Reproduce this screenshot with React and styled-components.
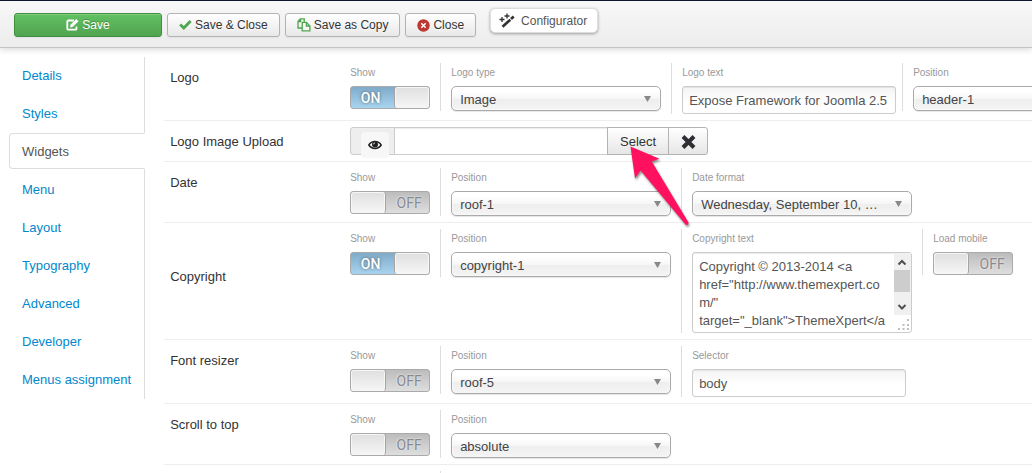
import React from 'react';
import styled, { createGlobalStyle, css } from 'styled-components';

const Global = createGlobalStyle`
  *, *::before, *::after { box-sizing: border-box; }
  body {
    margin: 0;
    background: #fff;
    color: #333;
    font: 13px/18px "Liberation Sans", Arial, Helvetica, sans-serif;
  }
  button, input, select, textarea { font: inherit; margin: 0; }
`;

const App = styled.div`
  min-height: 100vh;
  overflow: hidden;
`;

const Toolbar = styled.header`
  display: flex;
  align-items: flex-start;
  gap: 5px;
  height: 48px;
  padding: 12px 14px 0;
  border-top: 1px solid #10142d;
  border-bottom: 1px solid #c4c4c4;
  background: linear-gradient(#f8f8f8, #ececec);
  box-shadow: 0 2px 6px rgba(0, 0, 0, 0.14);
`;

const ToolButton = styled.button`
  display: flex;
  align-items: center;
  justify-content: center;
  gap: 3px;
  height: 24px;
  min-width: ${(p) => (p.$primary ? '148px' : '0')};
  padding: 0 11px;
  border: 1px solid ${(p) => (p.$primary ? '#3f8f3f' : '#b3b3b3')};
  border-radius: 3px;
  font-size: 12px;
  line-height: 18px;
  color: ${(p) => (p.$primary ? '#fff' : '#333')};
  background: ${(p) =>
    p.$primary ? 'linear-gradient(#62c162, #51a351)' : 'linear-gradient(#fff, #e8e8e8)'};
  text-shadow: ${(p) => (p.$primary ? '0 -1px 0 rgba(0,0,0,.25)' : '0 1px 1px rgba(255,255,255,.75)')};
  box-shadow: inset 0 1px 0 rgba(255, 255, 255, 0.2), 0 1px 2px rgba(0, 0, 0, 0.05);
`;

const ConfigButton = styled.button`
  display: flex;
  align-items: center;
  gap: 6px;
  height: 25px;
  margin: -5px 0 0 9px;
  padding: 0 10px 0 8px;
  border: 1px solid #ddd;
  border-radius: 5px;
  font-size: 12px;
  color: #555;
  background: #fff;
  box-shadow: 0 1px 3px rgba(0, 0, 0, 0.35);
`;

const Body = styled.div`
  display: flex;
  align-items: flex-start;
  gap: 19px;
  padding: 9px 0 0 9px;
`;

const Nav = styled.nav`
  flex: 0 0 136px;
  border-right: 1px solid #ddd;
`;

const NavLink = styled.a`
  display: block;
  margin: 0 0 2px;
  padding: 9px 12px 7px;
  border: 1px solid transparent;
  color: #0088cc;
  text-decoration: none;
  white-space: nowrap;
  ${(p) =>
    p.$active &&
    css`
      margin-right: -1px;
      border-color: #ddd #fff #ddd #ddd;
      border-radius: 4px 0 0 4px;
      color: #555;
      background: #fff;
    `}
`;

const Panel = styled.main`
  flex: 1;
  min-width: 0;
`;

const Row = styled.section`
  display: flex;
  align-items: flex-start;
  padding: 6px 0 6px 6px;
  border-bottom: 1px solid #eee;
`;

const RowTitle = styled.div`
  flex: 0 0 180px;
  padding: ${(p) => (p.$middle ? '0 0 8px' : '6px 0 0')};
  align-self: ${(p) => (p.$middle ? 'center' : 'flex-start')};
`;

const Cell = styled.div`
  flex: none;
  min-height: 2px;
  width: ${(p) => p.$width}px;
  padding-left: ${(p) => (p.$first ? 0 : 10)}px;
  border-left: ${(p) => (p.$first ? 0 : 1)}px solid #ddd;
`;

const Caption = styled.label`
  display: block;
  height: 23px;
  font-size: 10px;
  line-height: 20px;
  color: #999;
`;

const SelectBox = styled.div`
  display: grid;
  align-items: center;
  width: ${(p) => p.$width}px;

  select, svg { grid-area: 1 / 1; }
  svg {
    justify-self: end;
    margin-right: 10px;
    pointer-events: none;
  }
`;

const Dropdown = styled.select`
  appearance: none;
  width: 100%;
  height: 25px;
  padding: 2px 24px 0 8px;
  border: 1px solid #aaa;
  border-radius: 5px;
  color: #444;
  background: linear-gradient(#fff 20%, #f6f6f6 50%, #eee 52%, #f4f4f4 100%);
  box-shadow: inset 0 0 3px #fff, 0 1px 1px rgba(0, 0, 0, 0.1);
`;

const TextBox = styled.input`
  display: block;
  width: 214px;
  height: 28px;
  padding: 1px 6px 0;
  border: 1px solid #ccc;
  border-radius: 3px;
  color: #555;
  background: linear-gradient(#f4f4f4, #fff 60%);
  box-shadow: inset 0 1px 1px rgba(0, 0, 0, 0.075);
`;

const AreaBox = styled.div`
  position: relative;
  width: 220px;

  svg {
    position: absolute;
    top: 1px;
    right: 1px;
  }
`;

const Area = styled.textarea`
  display: block;
  width: 100%;
  height: 81px;
  padding: 5px 18px 3px 6px;
  border: 1px solid #ccc;
  border-radius: 3px;
  color: #555;
  background: #fff;
  line-height: 18px;
  white-space: pre;
  overflow: hidden;
  resize: none;
  box-shadow: inset 0 1px 1px rgba(0, 0, 0, 0.075);
`;

const Toggle = styled.label`
  display: flex;
  flex-direction: ${(p) => (p.$on ? 'row' : 'row-reverse')};
  width: 80px;
  height: 23px;
  border: 1px solid #aaa;
  border-radius: 3px;
  overflow: hidden;
  background: ${(p) =>
    p.$on ? 'linear-gradient(#7fabc9, #a9d4f0)' : 'linear-gradient(#bcbcbc, #dedede)'};

  input {
    appearance: none;
    width: 0;
    height: 0;
  }
`;

const ToggleText = styled.span`
  flex: 1;
  text-align: center;
  font: ${(p) => (p.$on ? 500 : 400)} 14px/23px Roboto, sans-serif;
  color: ${(p) => (p.$on ? '#fff' : '#888890')};
  text-shadow: ${(p) => (p.$on ? '0 0 3px rgba(0,0,0,.5)' : '0 0 2px #fff')};
  padding: ${(p) => (p.$on ? '0 4px 0 0' : '0 0 0 3px')};
`;

const Knob = styled.span`
  width: 35px;
  border-${(p) => (p.$on ? 'left' : 'right')}: 1px solid #a5a5a5;
  border-radius: 3px;
  background: linear-gradient(#dfdfdf, #f6f6f6);
  box-shadow: inset 0 0 0 1px #f6f6f6;
`;

const Upload = styled.div`
  display: flex;
  height: 28px;
`;

const Addon = styled.button`
  display: flex;
  justify-content: flex-end;
  width: 45px;
  padding: 4px 5px 0 0;
  border: 1px solid #ccc;
  border-radius: 3px 0 0 3px;
  background: #eee;

  span {
    display: flex;
    align-items: center;
    justify-content: center;
    width: 28px;
    height: 26px;
    flex: none;
    border-radius: 4px;
    background: #f7f7f7;
  }
`;

const UploadBox = styled(TextBox)`
  width: 214px;
  margin: 0 -1px;
  border-radius: 0;
  background: #fff;
`;

const GroupButton = styled.button`
  display: flex;
  align-items: center;
  justify-content: center;
  width: ${(p) => p.$width}px;
  margin-right: -1px;
  padding: 1px 0 0;
  border: 1px solid #b3b3b3;
  border-radius: ${(p) => (p.$last ? '0 3px 3px 0' : '0')};
  color: #333;
  background: linear-gradient(#fff, #e6e6e6);
`;

const PointerAnchor = styled.div`
  position: relative;
  display: flex;

  > svg {
    position: absolute;
    left: 21px;
    top: 17px;
    z-index: 2;
    pointer-events: none;
    filter: drop-shadow(1px 2px 1px rgba(0, 0, 0, 0.45));
  }
`;

const EditIcon = () => (
  <svg width="13" height="12" viewBox="0 0 13 12" fill="none" stroke="#fff" aria-hidden="true">
    <path d="M8 1.5H2.3a1 1 0 0 0-1 1v7.2a1 1 0 0 0 1 1h7.2a1 1 0 0 0 1-1V7.5" strokeWidth="1.8" />
    <path d="M4 8.600l.6-3L10.300 0l2.200 2.200-5.600 5.600z" fill="#fff" stroke="none" />
  </svg>
);

const CheckIcon = () => (
  <svg width="13" height="12" viewBox="0 0 13 12" fill="none" aria-hidden="true">
    <path d="M1.200 5.600L4.800 9 11.600 2" stroke="#4fa64f" strokeWidth="2.800" />
  </svg>
);

const CopyIcon = () => (
  <svg width="14" height="14" viewBox="0 0 14 14" fill="none" stroke="#4fa64f" strokeWidth="1.3" aria-hidden="true">
    <path d="M5 10H1V3.200L3.400.8H7.200V4M1 3.600h2.600V.8" />
    <path d="M5.200 12.900V4.400h4.200L12.900 8v4.900zM9.400 4.400V8h3.500" fill="#f6f6f6" />
  </svg>
);

const CancelIcon = () => (
  <svg width="13" height="13" viewBox="0 0 13 13" aria-hidden="true">
    <circle cx="6.500" cy="6.500" r="6.200" fill="#bd362f" />
    <path d="M4.300 4.300l4.400 4.400M8.700 4.300l-4.400 4.400" stroke="#fff" strokeWidth="1.600" />
  </svg>
);

const WandIcon = () => (
  <svg width="16" height="15" viewBox="0 0 16 15" fill="none" stroke="#333" aria-hidden="true">
    <path d="M3 4v5M.5 6.500h5M8 0.500v5M5.500 3h5" strokeWidth="1.300" />
    <path d="M3.500 13.800L11.300 6.700" strokeWidth="2.700" />
    <path d="M12 6l2.700-2.500" strokeWidth="2.700" />
  </svg>
);

const EyeIcon = () => (
  <svg width="14" height="10" viewBox="0 0 14 10" aria-hidden="true">
    <path d="M.8 5C3.800.4 10.200.4 13.200 5 10.200 9.600 3.800 9.600.8 5z" fill="none" stroke="#222" strokeWidth="1.400" />
    <circle cx="7" cy="4.600" r="3" fill="#222" />
    <path d="M5.400 4.400Q5.500 3 7 2.900" fill="none" stroke="#f7f7f7" strokeWidth=".8" />
  </svg>
);

const CrossIcon = () => (
  <svg width="15" height="14" viewBox="0 0 15 14" aria-hidden="true">
    <path d="M2 1.500l11 11M13 1.500l-11 11" stroke="#2e2e33" strokeWidth="4" />
  </svg>
);

const DownIcon = () => (
  <svg width="7" height="6" viewBox="0 0 7 6" aria-hidden="true">
    <path d="M0 0h7L3.500 6z" fill="#888" />
  </svg>
);

const ScrollIcon = () => (
  <svg width="17" height="79" viewBox="0 0 17 79" fill="none" aria-hidden="true">
    <path d="M0 0h17v62H0z" fill="#f0f0f0" />
    <path d="M0 17h16v22H0z" fill="#cdcdcd" />
    <path d="M4.500 11.500l3.500-3.500 3.500 3.500M4.500 52l3.500 3.500 3.500-3.500" stroke="#505050" strokeWidth="2" />
    <path
      d="M13 66h2v2h-2zM8.500 71h2v2h-2zM13 71h2v2h-2zM4 75h2v2H4zM8.500 75h2v2h-2zM13 75h2v2h-2z"
      fill="#bfbfbf"
    />
  </svg>
);

const PointerIcon = () => (
  <svg width="62" height="82" viewBox="0 0 62 82" aria-hidden="true">
    <path
      d="M2.500 2.500L31.500 14.700 23.700 17.500 60.500 78.500Q60.500 81 58 81L12.600 26.500 7 34.500z"
      fill="#ff1160"
    />
  </svg>
);

function Switch({ id, on, first, caption = 'Show', width }) {
  return (
    <Cell $first={first} $width={width}>
      <Caption htmlFor={id}>{caption}</Caption>
      <Toggle $on={on}>
        <input id={id} type="checkbox" role="switch" defaultChecked={on} />
        <ToggleText $on={on}>{on ? 'ON' : 'OFF'}</ToggleText>
        <Knob $on={on} />
      </Toggle>
    </Cell>
  );
}

function Choice({ id, caption = 'Position', value, boxWidth = 220, width = 241 }) {
  return (
    <Cell $width={width}>
      <Caption htmlFor={id}>{caption}</Caption>
      <SelectBox $width={boxWidth}>
        <Dropdown id={id} defaultValue={value}>
          <option>{value}</option>
        </Dropdown>
        <DownIcon />
      </SelectBox>
    </Cell>
  );
}

function Text({ id, caption, value, width }) {
  return (
    <Cell $width={width}>
      <Caption htmlFor={id}>{caption}</Caption>
      <TextBox id={id} type="text" defaultValue={value} />
    </Cell>
  );
}

const tabs = [
  'Details',
  'Styles',
  'Widgets',
  'Menu',
  'Layout',
  'Typography',
  'Advanced',
  'Developer',
  'Menus assignment',
];

const copyright = `Copyright © 2013-2014 <a
href="http://www.themexpert.co
m/"
target="_blank">ThemeXpert</a`;

export default function TemplateManager() {
  return (
    <App>
      <Global />
      <Toolbar>
        <ToolButton type="button" $primary>
          <EditIcon /> Save
        </ToolButton>
        <ToolButton type="button">
          <CheckIcon /> Save &amp; Close
        </ToolButton>
        <ToolButton type="button">
          <CopyIcon /> Save as Copy
        </ToolButton>
        <ToolButton type="button">
          <CancelIcon /> Close
        </ToolButton>
        <ConfigButton type="button">
          <WandIcon /> Configurator
        </ConfigButton>
      </Toolbar>
      <Body>
        <Nav>
          {tabs.map((tab) => (
            <NavLink key={tab} href="#" $active={tab === 'Widgets'}>
              {tab}
            </NavLink>
          ))}
        </Nav>
        <Panel>
          <Row>
            <RowTitle>Logo</RowTitle>
            <Switch id="logo-show" first on width={90} />
            <Choice id="logo-type" caption="Logo type" value="Image" boxWidth={210} width={231} />
            <Text id="logo-text" caption="Logo text" value="Expose Framework for Joomla 2.5" width={231} />
            <Choice id="logo-position" value="header-1" />
          </Row>
          <Row>
            <RowTitle as="label" htmlFor="logo-image">
              Logo Image Upload
            </RowTitle>
            <Upload>
              <Addon type="button" aria-label="Preview">
                <span>
                  <EyeIcon />
                </span>
              </Addon>
              <UploadBox id="logo-image" type="text" />
              <PointerAnchor>
                <GroupButton type="button" $width={62}>
                  Select
                </GroupButton>
                <PointerIcon />
              </PointerAnchor>
              <GroupButton type="button" aria-label="Clear" $width={40} $last>
                <CrossIcon />
              </GroupButton>
            </Upload>
          </Row>
          <Row>
            <RowTitle>Date</RowTitle>
            <Switch id="date-show" first width={90} />
            <Choice id="date-position" value="roof-1" />
            <Choice id="date-format" caption="Date format" value="Wednesday, September 10, …" />
          </Row>
          <Row>
            <RowTitle $middle>Copyright</RowTitle>
            <Switch id="copyright-show" first on width={90} />
            <Choice id="copyright-position" value="copyright-1" />
            <Cell $width={241}>
              <Caption htmlFor="copyright-text">Copyright text</Caption>
              <AreaBox>
                <Area id="copyright-text" defaultValue={copyright} />
                <ScrollIcon />
              </AreaBox>
            </Cell>
            <Switch id="copyright-mobile" caption="Load mobile" width={91} />
          </Row>
          <Row>
            <RowTitle>Font resizer</RowTitle>
            <Switch id="resizer-show" first width={90} />
            <Choice id="resizer-position" value="roof-5" />
            <Text id="resizer-selector" caption="Selector" value="body" width={241} />
          </Row>
          <Row>
            <RowTitle>Scroll to top</RowTitle>
            <Switch id="scroll-show" first width={90} />
            <Choice id="scroll-position" value="absolute" />
          </Row>
          <Row>
            <RowTitle />
            <Cell $first $width={90} />
            <Cell $width={241} />
          </Row>
        </Panel>
      </Body>
    </App>
  );
}
